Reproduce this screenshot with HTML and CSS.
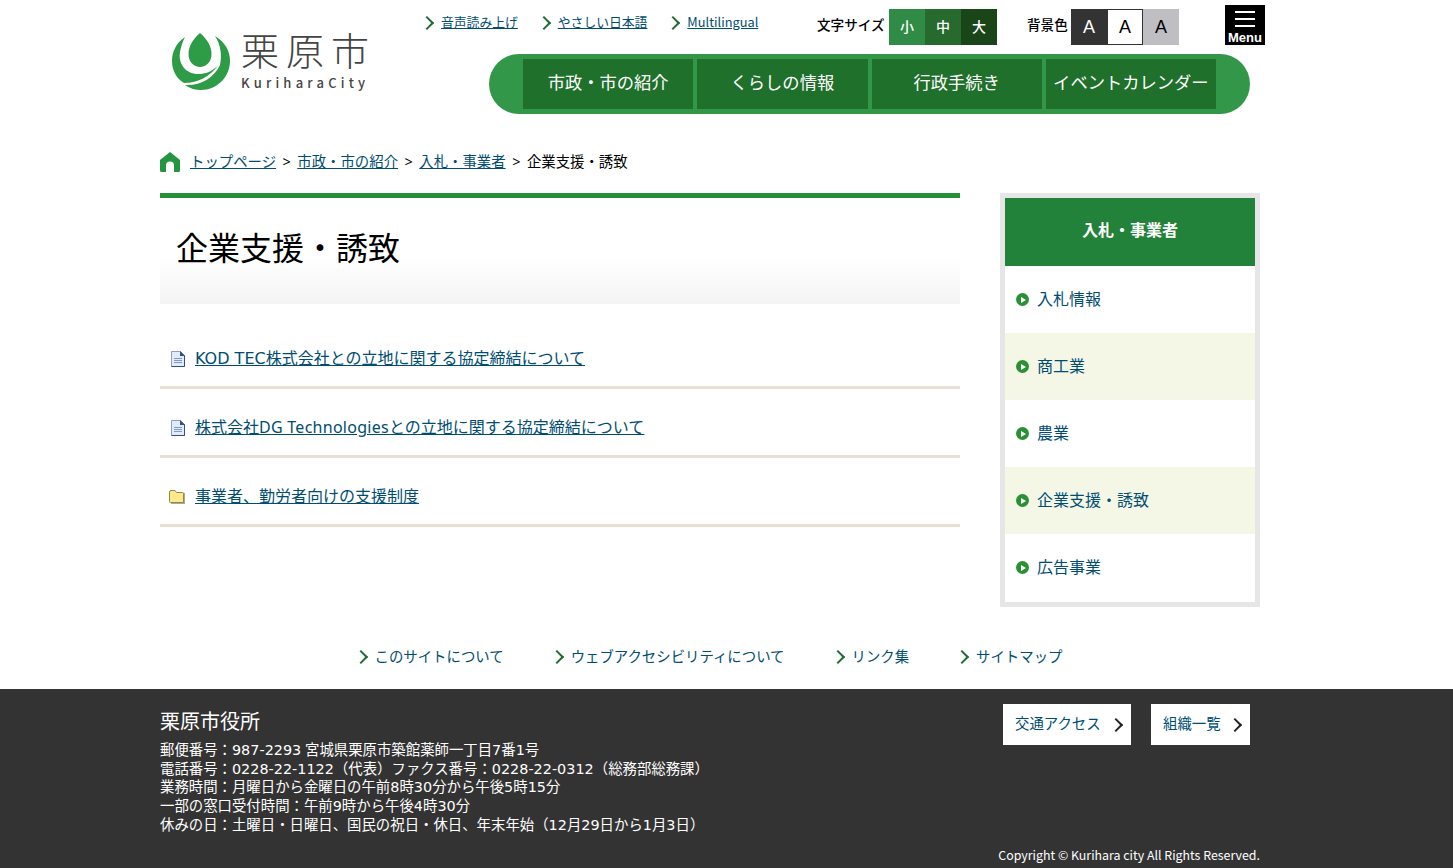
FILE: index.html
```html
<!DOCTYPE html>
<html lang="ja">
<head>
    <meta charset="UTF-8">
    <title>企業支援・誘致 - 栗原市</title>
    <link rel="stylesheet" href="styles.css">
</head>
<body>
    <div class="wrap">
        <div class="header">
            <a class="logo">
                <svg class="logo-mark" viewBox="0 0 66 66" width="66" height="66">
                    <path fill="#2e9b46" d="M32 5C39 11 43.500 18 43.500 26C43.500 34 38 39 32 39C26 39 20.500 34 20.500 26C20.500 18 25 11 32 5Z"/>
                    <path fill="#2e9b46" d="M17 9C8 15 4 24 4 33C4 43 9 51 16 55C30 55 43 48 50 37C44 44 37 46 30 46C18 46 10 36 12 24C13 18 15 13 17 9Z"/>
                    <path fill="#2e9b46" d="M47 8C57 14 62 23 62 33C62 49 49 62 33 62C27 62 21 60 17 57C32 58 46 50 52 37C54 28 53 17 47 8Z"/>
                </svg>
                <div class="logo-text">
                    <div class="logo-name">栗原市</div>
                    <div class="logo-en">KuriharaCity</div>
                </div>
            </a>
            <div class="header-right">
                <div class="tools">
                    <ul class="tool-links">
                        <li><a href="#">音声読み上げ</a></li>
                        <li><a href="#">やさしい日本語</a></li>
                        <li><a class="latin-narrow" href="#">Multilingual</a></li>
                    </ul>
                    <div class="switcher switcher-size">
                        <span class="switcher-label">文字サイズ</span>
                        <span class="size-btn size-s">小</span>
                        <span class="size-btn size-m">中</span>
                        <span class="size-btn size-l">大</span>
                    </div>
                    <div class="switcher switcher-bg">
                        <span class="switcher-label">背景色</span>
                        <span class="bg-btn bg-dark">A</span>
                        <span class="bg-btn bg-white">A</span>
                        <span class="bg-btn bg-gray">A</span>
                    </div>
                    <div class="menu-btn">
                        <span class="menu-bar"></span>
                        <span class="menu-bar"></span>
                        <span class="menu-bar"></span>
                        <span class="menu-label">Menu</span>
                    </div>
                </div>
                <div class="nav">
                    <a class="nav-item" href="#">市政・市の紹介</a>
                    <a class="nav-item" href="#">くらしの情報</a>
                    <a class="nav-item" href="#">行政手続き</a>
                    <a class="nav-item" href="#">イベントカレンダー</a>
                </div>
            </div>
        </div>

        <div class="breadcrumb">
            <svg class="home-icon" viewBox="0 0 20 20" width="20" height="20">
                <path fill="#25963f" d="M10 0L20 8V18.500Q20 20 18.500 20H14V13.500A4 4 0 0 0 6 13.500V20H1.500Q0 20 0 18.500V8Z"/>
            </svg>
            <a href="#">トップページ</a>
            <span class="sep">&gt;</span>
            <a href="#">市政・市の紹介</a>
            <span class="sep">&gt;</span>
            <a href="#">入札・事業者</a>
            <span class="sep">&gt;</span>
            <span>企業支援・誘致</span>
        </div>

        <div class="columns">
            <div class="main">
                <h1 class="page-title">企業支援・誘致</h1>
                <ul class="page-list">
                    <li>
                        <svg class="file-icon" viewBox="0 0 14 16" width="14" height="16">
                            <path fill="#e4ebf8" stroke="#8d9fc4" d="M.5.500H9.500L13.500 4.500V15.500H.5Z"/>
                            <path fill="none" stroke="#33507f" d="M13.500 4.500V15.500H.5"/>
                            <path fill="#33507f" d="M9 0L14 5H9Z"/>
                            <path stroke="#7f9ac8" d="M3 7.500H11M3 9.500H11M3 11.500H11"/>
                        </svg>
                        <a href="#"><span class="wide">KOD TEC</span>株式会社との立地に関する協定締結について</a>
                    </li>
                    <li>
                        <svg class="file-icon" viewBox="0 0 14 16" width="14" height="16">
                            <path fill="#e4ebf8" stroke="#8d9fc4" d="M.5.500H9.500L13.500 4.500V15.500H.5Z"/>
                            <path fill="none" stroke="#33507f" d="M13.500 4.500V15.500H.5"/>
                            <path fill="#33507f" d="M9 0L14 5H9Z"/>
                            <path stroke="#7f9ac8" d="M3 7.500H11M3 9.500H11M3 11.500H11"/>
                        </svg>
                        <a href="#">株式会社<span class="tech">DG Technologies</span>との立地に関する協定締結について</a>
                    </li>
                    <li>
                        <svg class="folder-icon" viewBox="0 0 16 14" width="16" height="14">
                            <path fill="#a9a9a0" d="M2 3H16V14H2Z"/>
                            <path fill="#fbe98a" stroke="#96854a" d="M.5 2Q.5.500 2 .500H6L7.500 2.500H13.500Q14.500 2.500 14.500 3.500V12.500H1.500Q.5 12.500 .5 11.500Z"/>
                        </svg>
                        <a href="#">事業者、勤労者向けの支援制度</a>
                    </li>
                </ul>
            </div>
            <div class="side">
                <div class="side-title">入札・事業者</div>
                <ul class="side-list">
                    <li><a href="#">入札情報</a></li>
                    <li><a href="#">商工業</a></li>
                    <li><a href="#">農業</a></li>
                    <li><a href="#">企業支援・誘致</a></li>
                    <li><a href="#">広告事業</a></li>
                </ul>
            </div>
        </div>

        <ul class="foot-links">
            <li><a href="#">このサイトについて</a></li>
            <li><a href="#">ウェブアクセシビリティについて</a></li>
            <li><a href="#">リンク集</a></li>
            <li><a href="#">サイトマップ</a></li>
        </ul>
    </div>

    <div class="footer">
        <div class="wrap">
            <div class="footer-top">
                <div class="address">
                    <div class="address-name">栗原市役所</div>
                    <p>郵便番号：<span class="wide">987-2293</span> 宮城県栗原市築館薬師一丁目<span class="wide">7</span>番<span class="wide">1</span>号</p>
                    <p>電話番号：<span class="wide">0228-22-1122</span>（代表）ファクス番号：<span class="wide">0228-22-0312</span>（総務部総務課）</p>
                    <p>業務時間：月曜日から金曜日の午前<span class="wide">8</span>時<span class="wide">30</span>分から午後<span class="wide">5</span>時<span class="wide">15</span>分</p>
                    <p>一部の窓口受付時間：午前<span class="wide">9</span>時から午後<span class="wide">4</span>時<span class="wide">30</span>分</p>
                    <p>休みの日：土曜日・日曜日、国民の祝日・休日、年末年始（<span class="wide">12</span>月<span class="wide">29</span>日から<span class="wide">1</span>月<span class="wide">3</span>日）</p>
                </div>
                <div class="footer-btns">
                    <a class="footer-btn btn-access" href="#">交通アクセス</a>
                    <a class="footer-btn btn-org" href="#">組織一覧</a>
                </div>
            </div>
            <div class="copyright">Copyright © Kurihara city All Rights Reserved.</div>
        </div>
    </div>
</body>
</html>
```

FILE: styles.css
```css
* {
    margin: 0;
    padding: 0;
    box-sizing: border-box;
}

body {
    font-family: "Noto Sans", "Noto Sans CJK JP", sans-serif;
    font-size: 16px;
    color: #000;
    background: #fff;
}

ul {
    list-style: none;
}

a {
    color: #004d71;
}

.wrap {
    width: 1100px;
    margin-left: 160px;
}

.wide {
    font-family: "DejaVu Sans", sans-serif;
}

.tech {
    letter-spacing: 0.27px;
}

/* header */
.header {
    display: flex;
    height: 145px;
}

.logo {
    display: flex;
    flex: 0 0 265px;
    height: 66px;
    margin-top: 28px;
    padding-left: 8px;
}

.logo-mark {
    flex: none;
}

.logo-text {
    margin-left: 7px;
    color: #444;
    white-space: nowrap;
}

.logo-name {
    font-size: 38px;
    font-weight: 300;
    line-height: 44px;
    letter-spacing: 7px;
}

.logo-en {
    font-family: "Noto Sans CJK JP", sans-serif;
    font-size: 13px;
    font-weight: 500;
    line-height: 16px;
    letter-spacing: 4.200px;
    margin-top: 3px;
}

.header-right {
    flex: none;
}

.tools {
    display: flex;
    width: 840px;
    height: 54px;
    padding-top: 5px;
}

.tool-links {
    display: flex;
    flex: 0 0 392px;
    padding-top: 7px;
    font-size: 12.800px;
    line-height: 20px;
}

.tool-links li {
    position: relative;
    padding-left: 16px;
    margin-right: 24px;
}

.latin-narrow {
    font-family: "Noto Sans CJK JP", sans-serif;
}

.tool-links li::before,
.foot-links li::before,
.footer-btn::after {
    content: "";
    position: absolute;
    width: 8px;
    height: 8px;
    border-top: 2px solid #1f6b34;
    border-right: 2px solid #1f6b34;
    transform: rotate(45deg);
}

.tool-links li::before {
    left: -3px;
    top: 6px;
}

.switcher {
    display: flex;
    align-items: flex-start;
    padding-top: 4px;
}

.switcher-size {
    flex: 0 0 210px;
}

.switcher-bg {
    flex: 0 0 198px;
}

.switcher-label {
    font-size: 13.600px;
    font-weight: 500;
    line-height: 32px;
    width: 72px;
    white-space: nowrap;
}

.switcher-bg .switcher-label {
    width: 44px;
}

.size-btn,
.bg-btn {
    width: 36px;
    height: 36px;
    text-align: center;
    line-height: 36px;
}

.size-btn {
    font-size: 14px;
    font-weight: 500;
    color: #fff;
}

.size-s { background: #2f8b46; }
.size-m { background: #276a2e; }
.size-l { background: #1a4519; }

.bg-btn {
    font-family: "Liberation Sans", sans-serif;
    font-size: 18px;
}

.bg-dark {
    background: #333;
    color: #fff;
}

.bg-white {
    background: #fff;
    color: #000;
    border: 1px solid #333;
    line-height: 34px;
}

.bg-gray {
    background: #bfbec3;
    color: #000;
}

.menu-btn {
    display: flex;
    flex: none;
    flex-direction: column;
    align-items: center;
    width: 40px;
    height: 40px;
    padding-top: 6px;
    background: #000;
    color: #fff;
}

.menu-bar {
    width: 20px;
    height: 2px;
    margin-bottom: 5px;
    background: #fff;
}

.menu-label {
    font-family: "Liberation Sans", sans-serif;
    font-size: 13px;
    font-weight: 700;
    line-height: 14px;
    margin-top: -1px;
}

.nav {
    display: flex;
    gap: 4px;
    width: 761px;
    height: 60px;
    margin-left: 64px;
    padding: 5px 34px;
    border-radius: 30px;
    background: #33974a;
}

.nav-item {
    flex: 1 1 0;
    text-align: center;
    font-size: 17.300px;
    line-height: 48px;
    height: 50px;
    color: #fff;
    text-decoration: none;
    background: #1f702b;
    white-space: nowrap;
}

/* breadcrumb */
.breadcrumb {
    display: flex;
    align-items: center;
    height: 48px;
    font-size: 14.400px;
    line-height: 20px;
    padding-bottom: 14px;
}

.home-icon {
    margin-right: 10px;
}

.sep {
    margin: 0 6.500px;
}

/* main */
.columns {
    display: flex;
    justify-content: space-between;
}

.main {
    width: 800px;
}

.page-title {
    height: 111px;
    padding: 28px 16px 0;
    border-top: 5px solid #25903a;
    font-size: 32px;
    font-weight: 400;
    line-height: 44px;
    background: linear-gradient(#fff 55%, #f4f4f4);
}

.page-list {
    margin-top: 16px;
}

.page-list li {
    position: relative;
    height: 69px;
    padding: 26px 0 0 35px;
    line-height: 24px;
    border-bottom: 3px solid #eadfd3;
}

.file-icon {
    position: absolute;
    left: 11px;
    top: 31px;
}

.folder-icon {
    position: absolute;
    left: 9px;
    top: 32px;
}

.side {
    width: 260px;
    height: 414px;
    border: 5px solid #e6e6e6;
}

.side-title {
    height: 68px;
    text-align: center;
    font-weight: 700;
    line-height: 65px;
    color: #fff;
    background: #22823a;
}

.side-list li {
    position: relative;
    height: 67px;
    padding-left: 32px;
    line-height: 66px;
}

.side-list li:nth-child(even) {
    background: #f4f7e6;
}

.side-list a {
    text-decoration: none;
}

.side-list li::before {
    content: "";
    position: absolute;
    left: 11px;
    top: 27px;
    width: 13px;
    height: 13px;
    border-radius: 50%;
    background: #2a9036;
}

.side-list li::after {
    content: "";
    position: absolute;
    left: 16px;
    top: 30.500px;
    border-left: 5px solid #fff;
    border-top: 3px solid transparent;
    border-bottom: 3px solid transparent;
}

.foot-links {
    display: flex;
    justify-content: center;
    gap: 50px;
    height: 82px;
    padding-top: 38px;
    font-size: 14.400px;
    line-height: 24px;
}

.foot-links li {
    position: relative;
    padding-left: 17px;
}

.foot-links a {
    text-decoration: none;
}

.foot-links li::before {
    left: -2px;
    top: 7px;
}

/* footer */
.footer {
    height: 179px;
    background: #333;
    color: #fff;
}

.footer-top {
    display: flex;
    justify-content: space-between;
    height: 156px;
}

.address {
    padding-top: 19px;
    font-size: 14.400px;
    line-height: 18.700px;
}

.address-name {
    font-size: 20px;
    line-height: 28px;
    margin-bottom: 5px;
}

.footer-btns {
    display: flex;
    gap: 20px;
    padding: 15px 10px 0 0;
}

.footer-btn {
    position: relative;
    display: block;
    height: 41px;
    padding-left: 12px;
    font-size: 14.400px;
    line-height: 39px;
    text-decoration: none;
    background: #fff;
}

.btn-access {
    width: 128px;
}

.btn-org {
    width: 99px;
}

.footer-btn::after {
    right: 10px;
    top: 16px;
    border-color: #222;
}

.copyright {
    font-family: "Noto Sans CJK JP", sans-serif;
    text-align: right;
    font-size: 12.400px;
    line-height: 20px;
}
```
